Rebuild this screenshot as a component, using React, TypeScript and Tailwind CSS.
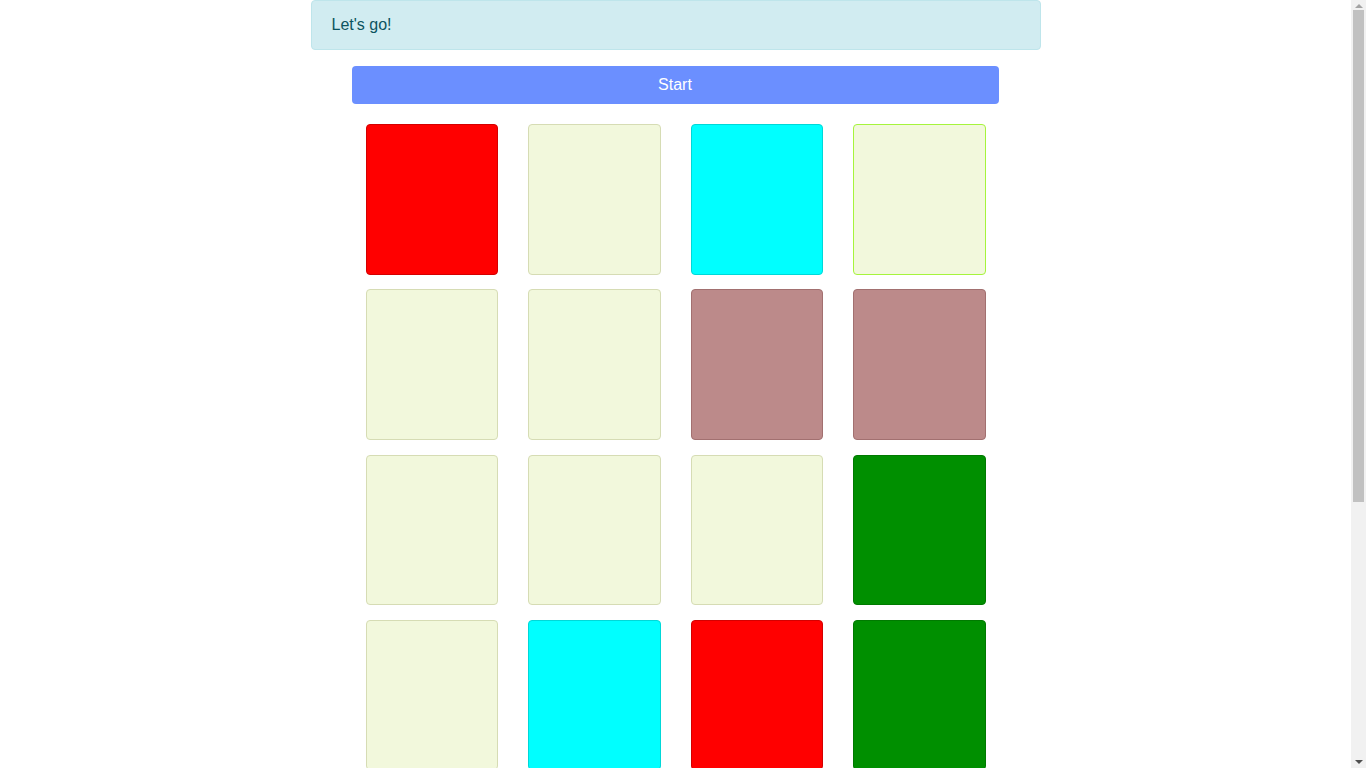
const hidden = "bg-[#f2f8dc] border-[#d6dcb4]";

const cards: string[] = [
  "bg-[#ff0000] border-[#d40000]",
  hidden,
  "bg-[#00ffff] border-[#00d8d8]",
  "bg-[#f2f8dc] border-[#a6f43c]",
  hidden,
  hidden,
  "bg-[#bc8a8a] border-[#a27070]",
  "bg-[#bc8a8a] border-[#a27070]",
  hidden,
  hidden,
  hidden,
  "bg-[#008f00] border-[#007a00]",
  hidden,
  "bg-[#00ffff] border-[#00d8d8]",
  "bg-[#ff0000] border-[#d40000]",
  "bg-[#008f00] border-[#007a00]",
];

const Scrollbar = () => (
  <div className="fixed right-0 top-0 flex h-screen w-[15px] flex-col items-center bg-[#f1f1f1]">
    <div className="mt-[4px] h-0 w-0 border-x-[4px] border-b-[4px] border-x-transparent border-b-[#a3a3a3]" />
    <div className="mt-[2px] h-[492px] w-[11px] bg-[#c1c1c1]" />
    <div className="flex-1" />
    <div className="mb-[4px] h-0 w-0 border-x-[4px] border-t-[4px] border-x-transparent border-t-[#505050]" />
  </div>
);

const App = () => {
  return (
    <div className="bg-white pb-[388px] pr-[15px] font-['Liberation_Sans',Arial,sans-serif]">
      <div className="mx-auto w-[730px]">
        <div className="h-[50px] rounded border border-[#bee5eb] bg-[#d1ecf1] px-5 py-3 text-base leading-6 text-[#0c5460]">
          Let's go!
        </div>

        <div className="ml-[41px] mr-[42px] mt-4">
          <button className="h-[38px] w-full rounded bg-[#6b8fff] text-base text-white">
            Start
          </button>
        </div>

        <div className="mx-auto mt-5 grid w-[620px] grid-cols-[repeat(4,132.5px)] gap-x-[30px] gap-y-[14.8px]">
          {cards.map((c, i) => (
            <div key={i} className={`h-[150.5px] rounded border ${c}`} />
          ))}
        </div>
      </div>
      <Scrollbar />
    </div>
  );
};

export default App;
